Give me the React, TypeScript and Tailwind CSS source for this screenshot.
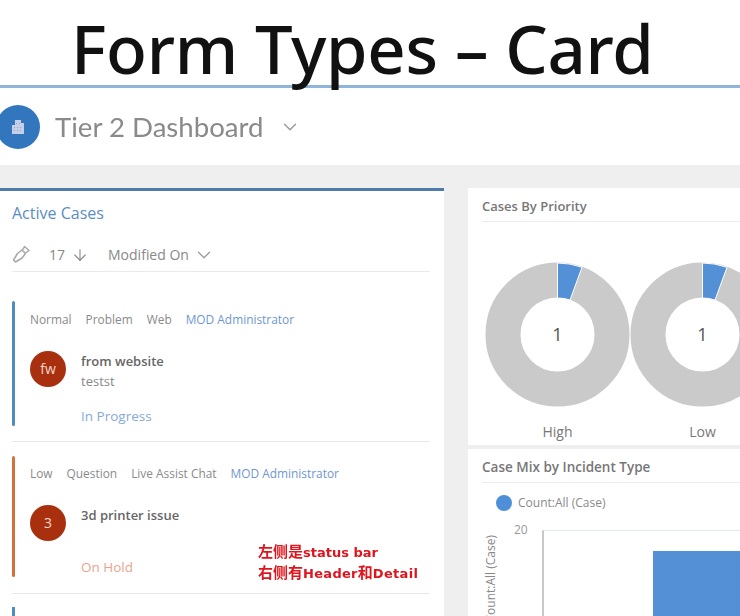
import { ArrowDown, ChevronDown } from 'lucide-react';

type CaseItem = {
  meta: string[];
  owner: string;
  initials: string;
  title: string;
  detail: string;
  status: string;
};

const cases: CaseItem[] = [
  { meta: ['Normal', 'Problem', 'Web'], owner: 'MOD Administrator', initials: 'fw', title: 'from website', detail: 'testst', status: 'In Progress' },
  { meta: ['Low', 'Question', 'Live Assist Chat'], owner: 'MOD Administrator', initials: '3', title: '3d printer issue', detail: '', status: 'On Hold' },
];

function Donut({ label }: { label: string }) {
  return (
    <div className="flex flex-col items-center w-[145px] shrink-0">
      <svg width="145" height="145" viewBox="0 0 145 145">
        <circle cx="72.5" cy="72.5" r="54.5" fill="none" stroke="#cacaca" strokeWidth="35" />
        <path d="M72.5 1 A71.5 71.5 0 0 1 97 5.3 L85 38 A36.5 36.5 0 0 0 72.5 36 Z" fill="#5490d6" stroke="#ffffff" strokeWidth="1" />
        <text x="72.5" y="79" textAnchor="middle" fontSize="18" fontWeight="500" fill="#555555" fontFamily="Open Sans, sans-serif">1</text>
      </svg>
      <div className="mt-[15px] text-sm leading-5 font-medium text-[#777777]">{label}</div>
    </div>
  );
}

function CaseCard({ item, blue }: { item: CaseItem; blue: boolean }) {
  return (
    <div className="flex">
      <div className={blue ? 'w-[3px] h-[125px] rounded-sm bg-[#4f8cc0]' : 'w-[3px] h-[121px] rounded-sm bg-[#d2723c]'} />
      <div className="ml-[15px] flex-1">
        <div className={blue ? 'mt-[10px] flex gap-[14px] text-[11.9px] leading-4 text-[#8a8a8a]' : 'mt-[9px] flex gap-[14px] text-[11.9px] leading-4 text-[#8a8a8a]'}>
          {item.meta.map((m) => (
            <span key={m}>{m}</span>
          ))}
          <span className="text-[#6f97cf]">{item.owner}</span>
        </div>
        <div className="mt-[24px] flex gap-[15px]">
          <div className="w-9 h-9 rounded-full bg-[#a9300f] flex items-center justify-center text-sm font-medium text-[#f5d8cc] shrink-0">
            {item.initials}
          </div>
          <div>
            <div className="text-[13px] leading-5 font-semibold text-[#666666]">{item.title}</div>
            <div className="text-[13px] leading-5 h-5 text-[#888888]">{item.detail}</div>
            <div className={blue ? 'mt-[15px] text-[13.5px] leading-5 text-[#86a9d8]' : 'mt-[12px] text-[13.5px] leading-5 text-[#eaa48d]'}>
              {item.status}
            </div>
          </div>
        </div>
      </div>
    </div>
  );
}

export default function App() {
  return (
    <div className="relative w-[740px] h-[616px] overflow-hidden flex flex-col bg-white font-['Open_Sans',sans-serif]">
      <div className="h-[85px] shrink-0 pl-[71px] text-[67px] leading-[96px] font-medium tracking-[-0.3px] text-[#111111] whitespace-nowrap relative z-10 font-['Noto_Sans',sans-serif] blur-[0.4px]">
        Form Types – Card
      </div>
      <div className="h-[3px] shrink-0 bg-[#8fb5da]" />

      <div className="flex-1 flex flex-col blur-[0.6px]">
        <div className="h-[77px] shrink-0 flex items-center -ml-1">
          <div className="w-11 h-11 rounded-full bg-[#3277bd] flex items-center justify-center">
            <svg width="16" height="16" viewBox="0 0 16 16" fill="#c6cfe8">
              <path d="M5 1h6v3h3v11H2V6h3z" />
              <path d="M6 4h1v1H6zM9 4h1v1H9zM4 8h1v1H4zM7 8h1v1H7zM10 8h1v1h-1zM4 11h1v1H4zM7 11h1v1H7zM10 11h1v1h-1z" fill="#8fa5d3" />
            </svg>
          </div>
          <div className="ml-[15px] text-[27.6px] leading-9 text-[#8a8a8a] font-['Lato',sans-serif]">Tier 2 Dashboard</div>
          <ChevronDown className="ml-[16px] w-[22px] h-[22px] text-[#999999]" strokeWidth={1.5} />
        </div>

        <div className="flex-1 min-h-0 bg-[#efefef] pt-[23px] flex gap-[24px]">
          <div className="w-[444px] shrink-0 bg-white border-t-[3px] border-[#4f7ba8] px-3">
            <div className="mt-[12px] text-base leading-5 text-[#5c8cc4]">Active Cases</div>
            <div className="mt-[18px] h-[31px] pb-[3px] flex items-center border-b border-[#eaeaea] mr-[2px] text-sm text-[#888888]">
              <svg width="19" height="19" viewBox="0 0 19 19" fill="none" stroke="#a8a8a8" strokeWidth="1.5" strokeLinejoin="round">
                <path d="M1.5 15 L3.5 17 L10 13 L13.5 8.5 L10 5 L5.5 8.5 Z" />
                <path d="M10.5 5 L12.5 1.5 L17 5.5 L13.5 8" />
              </svg>
              <span className="ml-[18px]">17</span>
              <ArrowDown className="ml-[6px] w-[18px] h-[18px] text-[#8a8a8a]" strokeWidth={1.5} />
              <span className="ml-[19px]">Modified On</span>
              <ChevronDown className="ml-[4px] w-[22px] h-[22px] text-[#999999]" strokeWidth={1.3} />
            </div>

            <div className="mt-[29px]">
              <CaseCard item={cases[0]} blue />
            </div>
            <div className="mt-[15px] h-px bg-[#e8e8e8] mr-[2px]" />
            <div className="mt-[14px]">
              <CaseCard item={cases[1]} blue={false} />
            </div>
            <div className="mt-[16px] h-px bg-[#e8e8e8] mr-[2px]" />
            <div className="mt-[13px] w-[3px] h-[20px] bg-[#4f8cc0]" />
          </div>

          <div className="flex-1 min-w-0 flex flex-col gap-[4px]">
            <div className="h-[257px] shrink-0 bg-white pl-[14px] overflow-hidden">
              <div className="h-[34px] pt-[8px] text-[13px] leading-5 font-semibold text-[#777777] border-b border-[#ececec]">Cases By Priority</div>
              <div className="mt-[40px] flex ml-[3px] whitespace-nowrap">
                <Donut label="High" />
                <Donut label="Low" />
              </div>
            </div>
            <div className="flex-1 min-h-0 bg-white pl-[14px] overflow-hidden">
              <div className="h-[34px] pt-[8px] text-[13.5px] leading-5 font-semibold text-[#777777] border-b border-[#ececec]">Case Mix by Incident Type</div>
              <div className="mt-[12px] ml-[14px] flex items-center gap-[6px] text-xs leading-4 text-[#8a8a8a]">
                <span className="w-4 h-4 rounded-full bg-[#4f8fd8]" />
                Count:All (Case)
              </div>
              <div className="mt-[11px] flex h-[100px]">
                <div className="w-[33px] -ml-[1px] flex items-start justify-start overflow-visible">
                  <span className="text-xs whitespace-nowrap text-[#888888] [writing-mode:vertical-rl] rotate-180 mt-[13px] ml-[2px]">Count:All (Case)</span>
                </div>
                <div className="w-[28px] text-xs leading-4 text-[#999999]">20</div>
                <div className="flex-1 mt-[8px] border-l-2 border-t border-l-[#c8c8c8] border-t-[#dfe9f5] pl-[109px] pt-[20px]">
                  <div className="h-full bg-[#5490d6]" />
                </div>
              </div>
            </div>
          </div>
        </div>
      </div>

      <div className="absolute left-[258px] top-[542px] text-[15px] leading-5 font-bold text-[#e0141c] font-['DejaVu_Sans','Noto_Sans_CJK_SC',sans-serif] whitespace-nowrap">
        <div>左侧是<span className="text-[13px]">status bar</span></div>
        <div>右侧有<span className="text-[13px] tracking-[0.3px]">Header</span>和<span className="text-[13px] tracking-[0.3px]">Detail</span></div>
      </div>
    </div>
  );
}
